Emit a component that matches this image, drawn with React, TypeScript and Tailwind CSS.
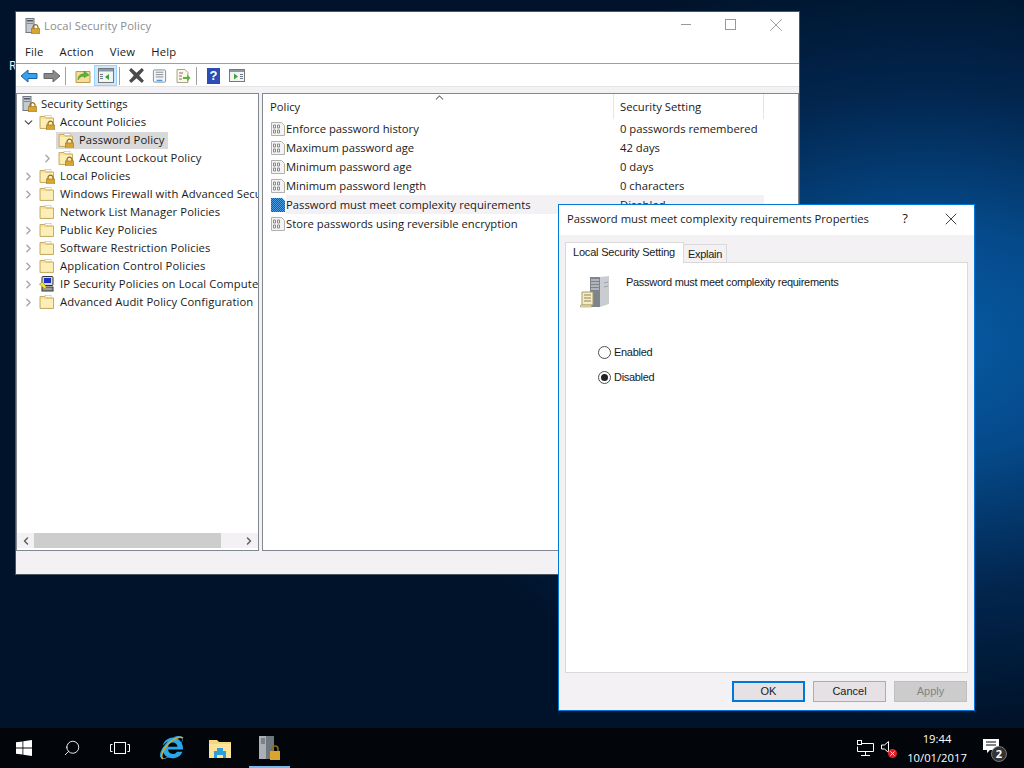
import { ChevronDown, ChevronLeft, ChevronRight, ChevronUp, Search, X } from "lucide-react";
import { FaInternetExplorer } from "react-icons/fa";

function Lock({ x = 7, y = 7 }: { x?: number; y?: number }) {
  return (
    <g transform={`translate(${x} ${y})`}>
      <path d="M2 4V2.6A2.5 2.5 0 0 1 7 2.6V4" fill="none" stroke="#8f6b1c" strokeWidth="1.2" />
      <rect x="0.5" y="4" width="8" height="5.5" fill="#d9a52e" stroke="#a87b1d" strokeWidth="0.7" />
    </g>
  );
}

function Folder({ lock }: { lock?: boolean }) {
  return (
    <svg width="16" height="16" viewBox="0 0 16 16" className="shrink-0">
      <path d="M1 2.5h5l1 1.5h7.5v10.500H1z" fill="#f8e094" stroke="#c8ad6a" />
      <rect x="2" y="5" width="12" height="8.500" fill="#fceeb8" />
      <rect x="6" y="1.5" width="6" height="2" fill="#fff" stroke="#c8ad6a" strokeWidth="0.5" />
      {lock && <Lock />}
    </svg>
  );
}

function Server() {
  return (
    <svg width="16" height="16" viewBox="0 0 16 16" className="shrink-0">
      <rect x="1" y="0.5" width="8" height="14" fill="#c5cad0" stroke="#6f767e" />
      <rect x="2" y="2" width="6" height="1.5" fill="#4f5a66" />
      <rect x="2" y="5" width="6" height="1" fill="#7f8993" />
      <Lock x={6} y={6.5} />
    </svg>
  );
}

function PolicyIcon() {
  return (
    <svg width="16" height="16" viewBox="0 0 16 16" className="shrink-0">
      <path d="M1.500 1.500h10l3 3v10h-13z" fill="#f4f4f4" stroke="#b0b0b0" />
      <path d="M3.500 4h2v3h-2zM7.500 4h2v3h-2zM3.500 9h2v3h-2zM7.500 9h2v3h-2z" fill="none" stroke="#8a8a8a" />
    </svg>
  );
}

function SelectedPolicyIcon() {
  return (
    <svg width="16" height="16" viewBox="0 0 16 16" className="shrink-0">
      <defs>
        <pattern id="dither" width="2" height="2" patternUnits="userSpaceOnUse">
          <rect width="2" height="2" fill="#4f9be0" />
          <rect width="1" height="1" fill="#0a5fb0" />
          <rect x="1" y="1" width="1" height="1" fill="#0a5fb0" />
        </pattern>
      </defs>
      <path d="M1 1h11l3 3v11H1z" fill="url(#dither)" />
    </svg>
  );
}

function IpIcon() {
  return (
    <svg width="16" height="16" viewBox="0 0 16 16" className="shrink-0">
      <rect x="3" y="0.5" width="11" height="9" rx="1" fill="#d7d7d7" stroke="#333" />
      <rect x="5" y="2" width="7" height="5" fill="#1f2fc4" />
      <rect x="3" y="11" width="11" height="4" fill="#9c9c9c" stroke="#333" />
      <path d="M0.500 8l3-2 4 5-2 2z" fill="#f4e23c" stroke="#8a7a10" strokeWidth="0.6" />
    </svg>
  );
}

function ToolArrow({ color, edge, flip }: { color: string; edge: string; flip?: boolean }) {
  return (
    <svg width="18" height="16" viewBox="0 0 18 16" className={flip ? "-scale-x-100" : ""}>
      <path d="M1 8l7-6v3.500h9v5H8V14z" fill={color} stroke={edge} />
    </svg>
  );
}

function ToolCell({ children, className = "" }: { children: React.ReactNode; className?: string }) {
  return <div className={`flex h-[21px] w-[23px] items-center justify-center ${className}`}>{children}</div>;
}

function ToolSep() {
  return <div className="ml-[2px] h-[18px] w-px bg-[#a0a0a0]" />;
}

function Toolbar() {
  return (
    <div className="flex h-[23px] shrink-0 items-center border-b border-[#e3e3e3] bg-white pl-px pt-px">
      <ToolCell>
        <ToolArrow color="#3aa0e8" edge="#1464ad" />
      </ToolCell>
      <ToolCell>
        <ToolArrow color="#8a8a8a" edge="#666" flip />
      </ToolCell>
      <ToolSep />
      <ToolCell className="ml-[5px]">
        <svg width="16" height="16" viewBox="0 0 16 16">
          <path d="M1 3.500h14v11H1z" fill="#f6dc96" stroke="#b99b52" />
          <path d="M3 12c0-4 2-6 6-6V3l5 4-5 2.500V8c-3 0-4 1-6 4z" fill="#58b43a" stroke="#3a8a22" strokeWidth="0.5" />
        </svg>
      </ToolCell>
      <ToolCell className="border border-[#99d1ff] bg-[#cce8ff]">
        <svg width="16" height="15" viewBox="0 0 16 15">
          <rect x="0.500" y="0.500" width="15" height="14" fill="#f4f4f4" stroke="#777" />
          <rect x="1" y="1" width="14" height="2.500" fill="#8a97a5" />
          <path d="M2 6h3v1H2zM2 8h3v1H2zM2 10h3v1H2z" fill="#6a7885" />
          <path d="M11 6v6L7 9z" fill="#3aa33a" />
        </svg>
      </ToolCell>
      <ToolSep />
      <ToolCell className="ml-[5px]">
        <svg width="17" height="17" viewBox="0 0 16 16">
          <path d="M1 3l2-2 5 4.500L13 1l2 2-4.500 5 4.500 5-2 2-5-4.500L3 15l-2-2 4.500-5z" fill="#4a4a4a" />
        </svg>
      </ToolCell>
      <ToolCell>
        <svg width="15" height="16" viewBox="0 0 16 16">
          <rect x="1.500" y="1.500" width="13" height="13" rx="1" fill="#f4f4f4" stroke="#8a8a8a" />
          <path d="M4 4h8M4 6.500h8M4 9h8" stroke="#7f8a96" />
          <rect x="5" y="12" width="6" height="1.500" fill="#3aa0e8" />
        </svg>
      </ToolCell>
      <ToolCell>
        <svg width="16" height="16" viewBox="0 0 16 16">
          <path d="M2 1.500h8l3 3v10H2z" fill="#fbf6e6" stroke="#a8a08a" />
          <path d="M4 5h4M4 8h3M4 11h3" stroke="#777" />
          <path d="M8 9h4V6.500l3.500 3.500-3.500 3.500V11H8z" fill="#58b43a" />
        </svg>
      </ToolCell>
      <ToolSep />
      <ToolCell className="ml-[5px]">
        <div className="flex h-[16px] w-[13px] items-center justify-center bg-[#2b4db5] font-['Liberation_Sans',sans-serif] text-[13px] font-bold leading-none text-white">
          ?
        </div>
      </ToolCell>
      <ToolCell>
        <svg width="16" height="13" viewBox="0 0 16 13">
          <rect x="0.500" y="0.500" width="15" height="12" fill="#f4f4f4" stroke="#777" />
          <rect x="1" y="1" width="14" height="2" fill="#8a97a5" />
          <path d="M11 5h3v1h-3zM11 7h3v1h-3zM11 9h3v1h-3z" fill="#6a7885" />
          <path d="M5 4.500v6l4-3z" fill="#3aa33a" />
        </svg>
      </ToolCell>
    </div>
  );
}

type TreeRow = {
  label: string;
  indent: number;
  chevron?: "open" | "closed";
  icon: "server" | "lock" | "folder" | "ip";
  selected?: boolean;
};

const treeRows: TreeRow[] = [
  { label: "Security Settings", indent: 0, icon: "server" },
  { label: "Account Policies", indent: 1, chevron: "open", icon: "lock" },
  { label: "Password Policy", indent: 2, icon: "lock", selected: true },
  { label: "Account Lockout Policy", indent: 2, chevron: "closed", icon: "lock" },
  { label: "Local Policies", indent: 1, chevron: "closed", icon: "lock" },
  { label: "Windows Firewall with Advanced Security", indent: 1, chevron: "closed", icon: "folder" },
  { label: "Network List Manager Policies", indent: 1, icon: "folder" },
  { label: "Public Key Policies", indent: 1, chevron: "closed", icon: "folder" },
  { label: "Software Restriction Policies", indent: 1, chevron: "closed", icon: "folder" },
  { label: "Application Control Policies", indent: 1, chevron: "closed", icon: "folder" },
  { label: "IP Security Policies on Local Computer", indent: 1, chevron: "closed", icon: "ip" },
  { label: "Advanced Audit Policy Configuration", indent: 1, chevron: "closed", icon: "folder" },
];

function Tree() {
  return (
    <div className="flex w-[243px] shrink-0 flex-col border border-[#828790] bg-white">
      <div className="flex-1 overflow-hidden pt-px text-[#1a1a1a]">
        {treeRows.map((row) => (
          <div
            key={row.label}
            className="flex h-[18px] items-center whitespace-nowrap"
            style={{ paddingLeft: row.indent === 0 ? 5 : (row.indent - 1) * 19 + 3 }}
          >
            {row.indent > 0 && (
              <span className="mr-[3px] flex w-[16px] shrink-0 justify-center">
                {row.chevron === "open" && <ChevronDown size={13} strokeWidth={2.5} className="text-[#555]" />}
                {row.chevron === "closed" && <ChevronRight size={13} strokeWidth={2.5} className="text-[#a6a6a6]" />}
              </span>
            )}
            <span className={row.selected ? "-ml-[2px] flex h-[17px] items-center bg-[#d9d9d9] pl-[2px] pr-[4px]" : "flex items-center"}>
              {row.icon === "server" && <Server />}
              {row.icon === "lock" && <Folder lock />}
              {row.icon === "folder" && <Folder />}
              {row.icon === "ip" && <IpIcon />}
              <span className={row.indent === 0 ? "ml-[3px]" : "ml-[5px] tracking-[0.1px]"}>{row.label}</span>
            </span>
          </div>
        ))}
      </div>
      <div className="mb-[2px] flex h-[15px] shrink-0 items-center bg-[#f4f1f5]">
        <span className="flex w-[17px] justify-center">
          <ChevronLeft size={12} strokeWidth={3} className="text-[#606060]" />
        </span>
        <div className="h-[15px] w-[187px] bg-[#cdcdcd]" />
        <div className="flex-1" />
        <span className="flex w-[17px] justify-center pr-[2px]">
          <ChevronRight size={12} strokeWidth={3} className="text-[#606060]" />
        </span>
      </div>
    </div>
  );
}

const policyRows = [
  { name: "Enforce password history", value: "0 passwords remembered" },
  { name: "Maximum password age", value: "42 days" },
  { name: "Minimum password age", value: "0 days" },
  { name: "Minimum password length", value: "0 characters" },
  { name: "Password must meet complexity requirements", value: "Disabled", selected: true },
  { name: "Store passwords using reversible encryption", value: "" },
];

function PolicyList() {
  return (
    <div className="ml-[3px] flex min-w-0 flex-1 flex-col border border-[#828790] bg-white text-[#1a1a1a]">
      <div className="relative flex h-[25px] shrink-0">
        <div className="flex w-[351px] items-center border-r border-[#e5e5e5] pl-[7px] pt-px">Policy</div>
        <div className="flex w-[150px] items-center border-r border-[#e5e5e5] pl-[6px] pt-px">Security Setting</div>
        <ChevronUp size={13} className="absolute left-[170px] top-[-3px] text-[#777]" />
      </div>
      {policyRows.map((row) => (
        <div key={row.name} className="flex h-[19px] items-center pl-[7px]">
          {row.selected ? <SelectedPolicyIcon /> : <PolicyIcon />}
          <div className={row.selected ? "flex h-full w-[478px] items-center bg-[#f4f1f5] pt-px" : "flex h-full w-[478px] items-center pt-px"}>
            <span className="w-[334px] shrink-0 whitespace-nowrap">{row.name}</span>
            <span className="whitespace-nowrap">{row.value}</span>
          </div>
        </div>
      ))}
    </div>
  );
}

function MainWindow() {
  return (
    <div className="absolute left-[15px] top-[11px] flex h-[564px] w-[785px] flex-col border border-[#4a5562] bg-[#f4f1f5] font-['Open_Sans',sans-serif] text-[11.25px]">
      <div className="flex h-[30px] shrink-0 items-center bg-white pb-[2px] pl-[9px]">
        <Server />
        <span className="ml-[3px] tracking-[0.1px] text-[#8d8d8d]">Local Security Policy</span>
        <div className="mb-[3px] ml-auto mr-px flex items-center">
          <span className="flex w-[45px] justify-center">
            <span className="h-px w-[10px] bg-[#999]" />
          </span>
          <span className="flex w-[45px] justify-center">
            <span className="h-[11px] w-[11px] border border-[#999]" />
          </span>
          <span className="flex w-[45px] justify-center">
            <X size={22} strokeWidth={1} className="text-[#999]" />
          </span>
        </div>
      </div>
      <div className="flex h-[22px] shrink-0 items-center gap-[16px] border-b border-[#a0a0a0] bg-white pl-[9px] tracking-[0.2px] text-[#1a1a1a]">
        <span>File</span>
        <span>Action</span>
        <span>View</span>
        <span>Help</span>
      </div>
      <Toolbar />
      <div className="mt-[6px] flex min-h-0 flex-1">
        <Tree />
        <PolicyList />
      </div>
      <div className="h-[23px] shrink-0" />
    </div>
  );
}

function Radio({ label, checked }: { label: string; checked?: boolean }) {
  return (
    <div className="flex h-[13px] items-center">
      <span className="flex h-[13px] w-[13px] items-center justify-center rounded-full border border-[#4d4d4d] bg-white">
        {checked && <span className="h-[7px] w-[7px] rounded-full bg-[#222]" />}
      </span>
      <span className="ml-[3px]">{label}</span>
    </div>
  );
}

function DialogIcon() {
  return (
    <svg width="32" height="34" viewBox="0 0 32 34" className="shrink-0">
      <path d="M10 2h10v30H10z" fill="#7d858c" />
      <path d="M20 2l9-1v28l-9 3z" fill="#c9cdd1" />
      <path d="M11 5h8M11 8h8M11 11h8M11 14h8" stroke="#e2e5e8" />
      <path d="M24 8l4-1M24 12l4-1" stroke="#9aa0a6" />
      <path d="M2 17h11v13H2z" fill="#f6ecc4" stroke="#a69a6a" />
      <path d="M0.500 30h11v2h-11z" fill="#e8dca8" stroke="#a69a6a" strokeWidth="0.6" />
      <path d="M4 20h7M4 23h7M4 26h7" stroke="#8c8560" />
    </svg>
  );
}

function Dialog() {
  return (
    <div className="absolute left-[558px] top-[204px] flex h-[507px] w-[417px] flex-col border border-[#0078d7] bg-[#f4f1f5] font-['Liberation_Sans',sans-serif] text-[11px] tracking-[-0.3px] text-[#1a1a1a]">
      <div className="flex h-[30px] shrink-0 items-center bg-white pb-[2px] pl-[8px] font-['Open_Sans',sans-serif] text-[11.25px] tracking-normal">
        <span>Password must meet complexity requirements Properties</span>
        <span className="ml-auto flex w-[46px] justify-center text-[13px]">?</span>
        <span className="mr-px flex w-[45px] justify-center">
          <X size={20} strokeWidth={1} />
        </span>
      </div>
      <div className="flex flex-1 flex-col px-[6px] pb-[8px] pt-[7px]">
        <div className="flex h-[20px] items-end">
          <div className="z-10 -mb-px flex h-[21px] w-[119px] items-center border border-b-0 border-[#d9d9d9] bg-white pb-px pl-[7px] tracking-[-0.2px]">
            Local Security Setting
          </div>
          <div className="flex h-[18px] w-[43px] items-center justify-center border border-b-0 border-l-0 border-[#d9d9d9] pt-px">Explain</div>
        </div>
        <div className="flex-1 border border-[#d9d9d9] bg-white pl-[14px] pt-[12px]">
          <div className="flex">
            <DialogIcon />
            <span className="ml-[14px] mt-[-1px]">Password must meet complexity requirements</span>
          </div>
          <div className="ml-[18px] mt-[37px] flex flex-col gap-[12px]">
            <Radio label="Enabled" />
            <Radio label="Disabled" checked />
          </div>
        </div>
        <div className="mt-[8px] flex h-[21px] justify-end gap-[8px] pr-px tracking-normal">
          <div className="flex w-[73px] items-center justify-center border-2 border-[#0078d7] bg-[#e5e1e5]">OK</div>
          <div className="flex w-[73px] items-center justify-center border border-[#adadad] bg-[#e5e1e5]">Cancel</div>
          <div className="flex w-[73px] items-center justify-center border border-[#bfbfbf] bg-[#cccccc] text-[#838383]">Apply</div>
        </div>
      </div>
    </div>
  );
}

function Wallpaper() {
  return (
    <svg className="absolute inset-0 h-full w-full" viewBox="0 0 1024 768" preserveAspectRatio="none">
      <defs>
        <radialGradient id="glow" gradientUnits="userSpaceOnUse" cx="930" cy="340" r="560" gradientTransform="translate(0 110) scale(1 0.68)">
          <stop offset="0" stopColor="#075aa4" />
          <stop offset="0.3" stopColor="#054a8a" />
          <stop offset="0.65" stopColor="#02264f" />
          <stop offset="1" stopColor="#00132a" />
        </radialGradient>
      </defs>
      <rect width="1024" height="768" fill="#00132a" />
      <rect width="1024" height="768" fill="url(#glow)" />
    </svg>
  );
}

function Taskbar() {
  return (
    <div className="absolute bottom-0 left-0 right-0 flex h-[40px] items-center bg-[#02060b] text-white">
      <div className="flex w-[48px] justify-center">
        <svg width="16" height="16" viewBox="0 0 16 16">
          <path d="M0 2.300L6.500 1.400V7.600H0zM7.300 1.300L16 0V7.600H7.300zM0 8.400H6.500V14.600L0 13.700zM7.300 8.400H16V16L7.300 14.700z" fill="#fff" />
        </svg>
      </div>
      <div className="flex w-[48px] justify-center">
        <Search size={18} strokeWidth={1.2} className="-scale-x-100" />
      </div>
      <div className="flex w-[48px] justify-center">
        <svg width="20" height="14" viewBox="0 0 20 14" fill="none" stroke="#fff">
          <rect x="4.500" y="1.500" width="11" height="11" />
          <path d="M2.500 3.500H0.500V10.500H2.500M17.500 3.500H19.500V10.500H17.500" />
        </svg>
      </div>
      <div className="ml-[4px] flex w-[48px] justify-center">
        <div className="relative h-[24px] w-[24px]">
          <FaInternetExplorer size={23} className="text-[#2aa8ea]" />
          <svg width="24" height="24" viewBox="0 0 24 24" fill="none" stroke="#e0a91c" strokeWidth="1.500" className="absolute left-0 top-0">
            <path d="M3 23c-3-2 0-10 5-15s12-8 15-6" />
          </svg>
        </div>
      </div>
      <div className="flex w-[48px] justify-center">
        <svg width="22" height="19" viewBox="0 0 22 19">
          <path d="M0 1h8l2 2h12v16H0z" fill="#f5d77d" />
          <rect y="5" width="22" height="14" fill="#fbe39a" />
          <path d="M5 19v-7h3V9h6v3h3v7h-3v-3H8v3z" fill="#2ca0dc" />
        </svg>
      </div>
      <div className="relative flex h-full w-[48px] items-center justify-center pl-[4px]">
        <svg width="22" height="25" viewBox="0 0 22 25">
          <rect x="0" y="0" width="15" height="23" fill="#aab0b6" />
          <rect x="7" y="0" width="8" height="23" fill="#6f777f" />
          <path d="M2 3h4M2 5h4M2 7h4" stroke="#555" />
          <path d="M13 15v-2a3 3 0 0 1 6 0v2" fill="none" stroke="#8f6b1c" strokeWidth="1.500" />
          <rect x="11" y="15" width="10" height="9" fill="#d9a52e" />
        </svg>
        <div className="absolute bottom-0 left-[5px] right-[2px] h-[2px] bg-[#76b9ed]" />
      </div>
      <div className="ml-auto flex items-center">
        <svg width="17" height="17" viewBox="0 0 17 17" fill="none" stroke="#fff" className="mr-[7px]">
          <path d="M4.500 3.500H16.500V11.500H0.500V6.500M8.500 11.500V15.500M4 15.500H13" />
          <rect x="0.500" y="0.500" width="4" height="4" fill="#02060b" />
        </svg>
        <div className="relative mr-[8px] h-[16px] w-[16px]">
          <svg width="10" height="14" viewBox="0 0 10 14" fill="none" stroke="#fff">
            <path d="M0.500 5H3.500L7.500 1.500V12.500L3.500 9H0.500z" />
          </svg>
          <div className="absolute bottom-[-2px] right-0 flex h-[9px] w-[9px] items-center justify-center rounded-full bg-[#e0202a]">
            <X size={7} strokeWidth={3} />
          </div>
        </div>
        <div className="flex w-[64px] flex-col items-center font-['Open_Sans',sans-serif] text-[11.25px] leading-[19px]">
          <span>19:44</span>
          <span>10/01/2017</span>
        </div>
        <div className="relative ml-[14px] mr-[17px] h-[20px] w-[24px]">
          <svg width="16" height="15" viewBox="0 0 16 15" className="absolute left-0 top-px">
            <path d="M0 0H16V11H7L4 14V11H0z" fill="#fff" />
            <path d="M3 3H13M3 6H13" stroke="#02060b" />
          </svg>
          <div className="absolute bottom-[-4px] right-0 flex h-[16px] w-[16px] items-center justify-center rounded-full border border-[#777] bg-[#333] font-['Open_Sans',sans-serif] text-[11px] font-bold">
            2
          </div>
        </div>
      </div>
    </div>
  );
}

export default function App() {
  return (
    <div className="relative h-[768px] w-[1024px] overflow-hidden bg-[#00132a]">
      <Wallpaper />
      <span className="absolute left-[9px] top-[57px] font-['Open_Sans',sans-serif] text-[12px] text-white">R</span>
      <MainWindow />
      <Dialog />
      <Taskbar />
    </div>
  );
}
